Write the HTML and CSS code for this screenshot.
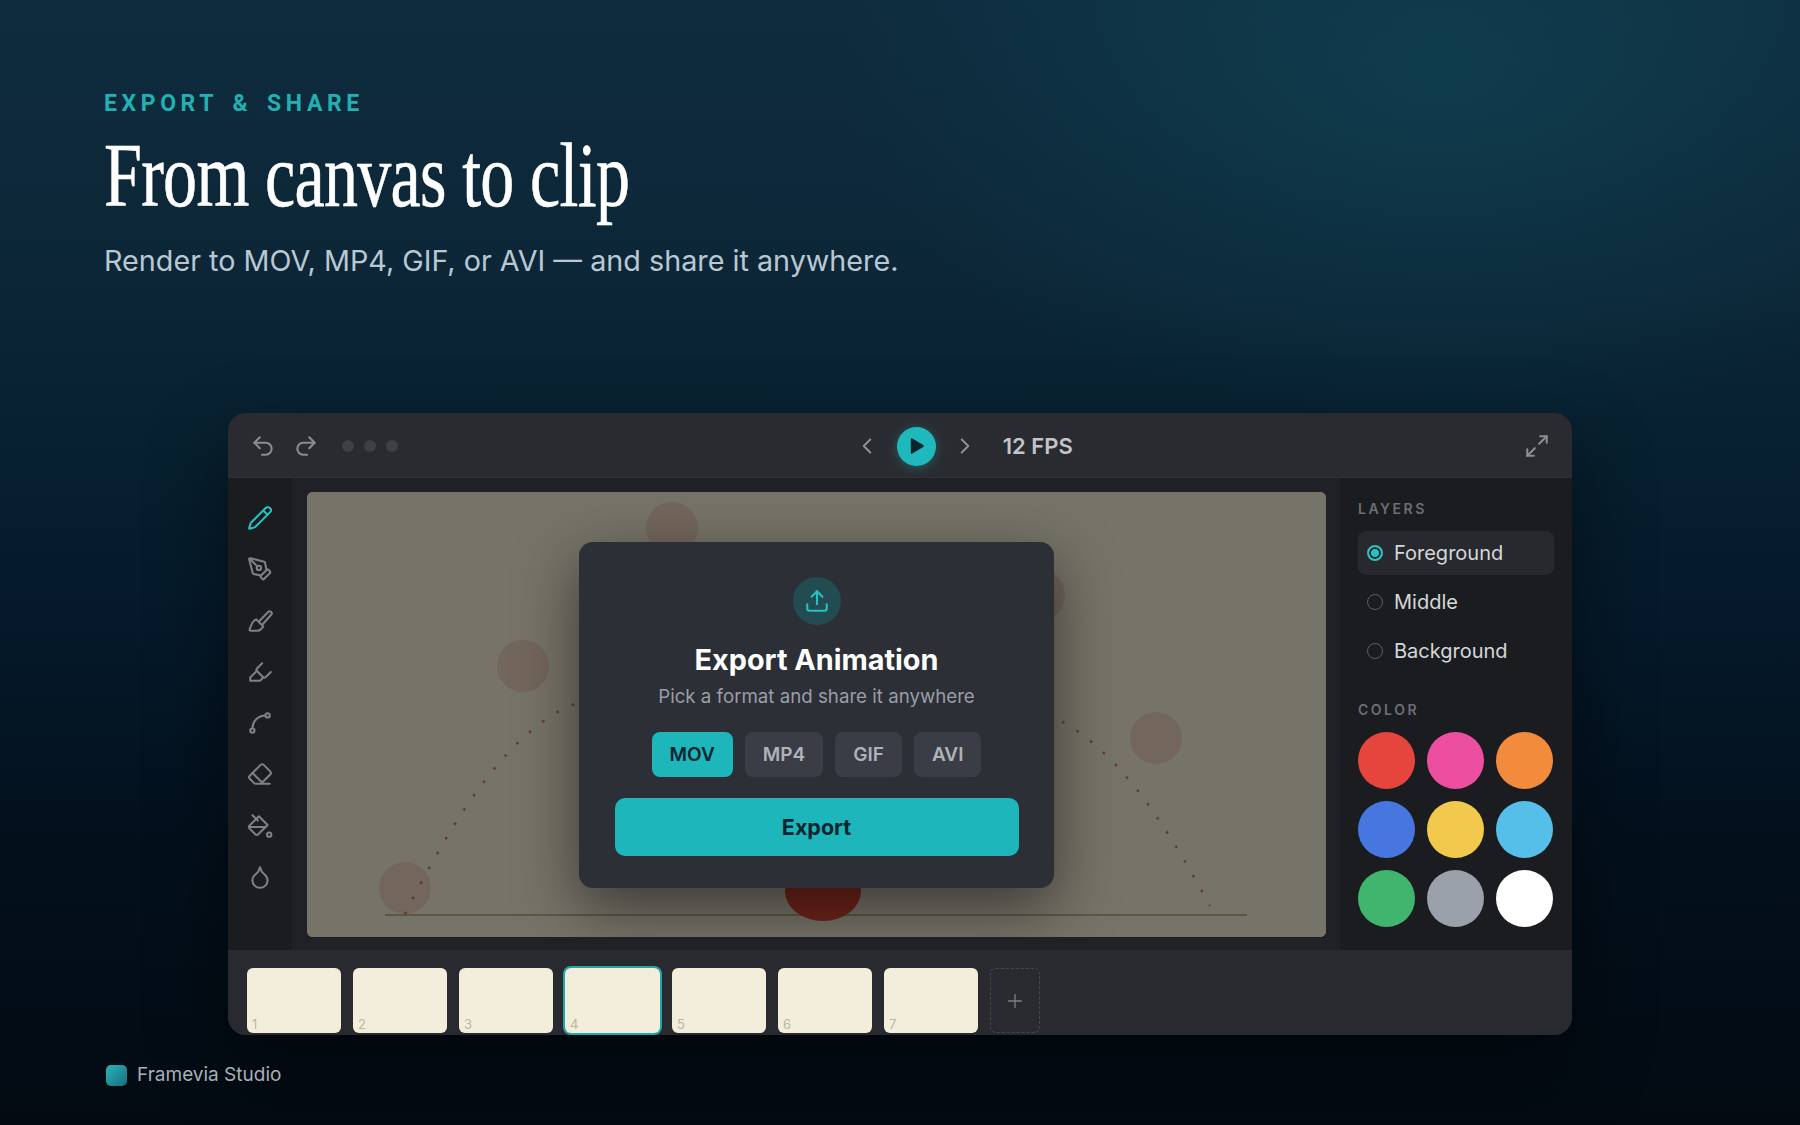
FILE: index.html
```html
<!DOCTYPE html>
<html lang="en">
<head>
  <meta charset="UTF-8">
  <title>Framevia Studio - Export &amp; Share</title>
  <link rel="stylesheet" href="styles.css">
</head>
<body>
  <header class="hero">
    <div class="eyebrow">EXPORT &amp; SHARE</div>
    <h1><span>From canvas to clip</span></h1>
    <p class="lede">Render to MOV, MP4, GIF, or AVI — and share it anywhere.</p>
  </header>

  <div class="window">
    <div class="toolbar">
      <div class="tb-group">
        <svg class="ico" viewBox="0 0 24 24"><path d="M9 14 4 9l5-5"/><path d="M4 9h10.5a5.5 5.5 0 0 1 5.5 5.5a5.5 5.5 0 0 1-5.5 5.5H11"/></svg>
        <svg class="ico" viewBox="0 0 24 24"><path d="m15 14 5-5-5-5"/><path d="M20 9H9.5A5.5 5.5 0 0 0 4 14.5A5.5 5.5 0 0 0 9.5 20H13"/></svg>
        <div class="dots"><i></i><i></i><i></i></div>
      </div>
      <div class="tb-group tb-center">
        <svg class="ico" viewBox="0 0 24 24"><path d="m15 18-6-6 6-6"/></svg>
        <div class="play"><svg viewBox="0 0 24 24"><polygon points="7 4 20 12 7 20"/></svg></div>
        <svg class="ico" viewBox="0 0 24 24"><path d="m9 18 6-6-6-6"/></svg>
        <div class="fps">12 FPS</div>
      </div>
      <svg class="ico" viewBox="0 0 24 24"><path d="M15 3h6v6"/><path d="m21 3-7 7"/><path d="m3 21 7-7"/><path d="M9 21H3v-6"/></svg>
    </div>

    <div class="main">
      <nav class="rail">
        <svg class="ico active" viewBox="0 0 24 24"><path d="M21.174 6.812a1 1 0 0 0-3.986-3.987L3.842 16.174a2 2 0 0 0-.5.83l-1.321 4.352a.5.5 0 0 0 .623.622l4.353-1.32a2 2 0 0 0 .83-.497z"/><path d="m15 5 4 4"/></svg>
        <svg class="ico" viewBox="0 0 24 24"><path d="M15.707 21.293a1 1 0 0 1-1.414 0l-1.586-1.586a1 1 0 0 1 0-1.414l5.586-5.586a1 1 0 0 1 1.414 0l1.586 1.586a1 1 0 0 1 0 1.414z"/><path d="m18 13-1.375-6.874a1 1 0 0 0-.746-.776L3.235 2.028a1 1 0 0 0-1.207 1.207L5.35 15.879a1 1 0 0 0 .776.746L13 18"/><path d="m2.3 2.3 7.286 7.286"/><circle cx="11" cy="11" r="2"/></svg>
        <svg class="ico" viewBox="0 0 24 24"><path d="m11.500 12 8-8.300a1.900 1.900 0 0 1 2.800 2.600L14.500 15"/><path d="M8.500 10.500 15 17c-.5 1-1 1.500-2 2.500-1 .8-2 1.500-3.500 1.500H3.500c-1 0-1.300-.8-1-1.500 1-2.500 2-7.500 6-9z"/></svg>
        <svg class="ico" viewBox="0 0 24 24"><path d="m9 11-6 6v3h9l3-3"/><path d="m22 12-4.600 4.600a2 2 0 0 1-2.800 0l-5.200-5.200a2 2 0 0 1 0-2.800L14 4"/></svg>
        <svg class="ico" viewBox="0 0 24 24"><circle cx="19" cy="5" r="2"/><circle cx="5" cy="19" r="2"/><path d="M5 17A12 12 0 0 1 17 5"/></svg>
        <svg class="ico" viewBox="0 0 24 24"><path d="M21 21H8a2 2 0 0 1-1.420-.587l-3.994-3.999a2 2 0 0 1 0-2.828l10-10a2 2 0 0 1 2.829 0l5.999 6a2 2 0 0 1 0 2.828L12.834 21"/><path d="m5.082 11.090 8.828 8.828"/></svg>
        <svg class="ico" viewBox="0 0 24 24"><path d="m19 11-8-8-8.600 8.600a2 2 0 0 0 0 2.800l5.200 5.200c.8.800 2 .800 2.800 0L19 11Z"/><path d="m5 2 5 5"/><path d="M2 13h15"/><circle cx="20.500" cy="20" r="2"/></svg>
        <svg class="ico" viewBox="0 0 24 24"><path d="M12 22a7 7 0 0 0 7-7c0-2-1-3.900-3-5.500s-3.500-4-4-6.500c-.5 2.500-2 4.900-4 6.500C6 11.100 5 13 5 15a7 7 0 0 0 7 7z"/></svg>
      </nav>

      <div class="stage">
        <div class="canvas">
          <svg class="art" viewBox="0 0 1019 445">
            <line class="ground" x1="78" y1="423" x2="940" y2="423"/>
            <circle class="ghost" cx="98" cy="396" r="26"/>
            <circle class="ghost" cx="216" cy="174" r="26"/>
            <circle class="ghost" cx="365" cy="36" r="26"/>
            <circle class="ghost" cx="732" cy="103" r="26"/>
            <circle class="ghost" cx="849" cy="246" r="26"/>
            <path class="arc" d="M98 422C140 338 200 236 270 211"/>
            <path class="arc" d="M740 222C805 250 855 325 903 414"/>
            <ellipse class="ball" cx="516" cy="399" rx="38" ry="30"/>
          </svg>
          <div class="overlay">
            <div class="modal">
              <div class="modal-icon">
                <svg class="ico" viewBox="0 0 24 24"><path d="M12 3v12"/><path d="m17 8-5-5-5 5"/><path d="M21 15v4a2 2 0 0 1-2 2H5a2 2 0 0 1-2-2v-4"/></svg>
              </div>
              <h2>Export Animation</h2>
              <p>Pick a format and share it anywhere</p>
              <div class="formats">
                <button class="fmt on">MOV</button>
                <button class="fmt">MP4</button>
                <button class="fmt">GIF</button>
                <button class="fmt">AVI</button>
              </div>
              <button class="export-btn">Export</button>
            </div>
          </div>
        </div>
      </div>

      <aside class="panel">
        <div class="panel-label">LAYERS</div>
        <div class="layers">
          <div class="layer on"><span class="radio"></span>Foreground</div>
          <div class="layer"><span class="radio"></span>Middle</div>
          <div class="layer"><span class="radio"></span>Background</div>
        </div>
        <div class="panel-label color-label">COLOR</div>
        <div class="swatches">
          <i class="red"></i><i class="pink"></i><i class="orange"></i>
          <i class="blue"></i><i class="yellow"></i><i class="sky"></i>
          <i class="green"></i><i class="gray"></i><i class="white"></i>
        </div>
      </aside>
    </div>

    <div class="film">
      <div class="thumb">1</div>
      <div class="thumb">2</div>
      <div class="thumb">3</div>
      <div class="thumb current">4</div>
      <div class="thumb">5</div>
      <div class="thumb">6</div>
      <div class="thumb">7</div>
      <div class="add">
        <svg class="ico" viewBox="0 0 24 24"><path d="M5 12h14"/><path d="M12 5v14"/></svg>
      </div>
    </div>
  </div>

  <footer class="brand"><i></i>Framevia Studio</footer>
</body>
</html>
```

FILE: styles.css
```css
* {
  box-sizing: border-box;
}
body {
  margin: 0;
  width: 1800px;
  height: 1125px;
  overflow: hidden;
  font-family: Inter, "Liberation Sans", sans-serif;
  color: #fff;
  background:
    radial-gradient(ellipse 600px 360px at 1440px 70px, rgba(18, 88, 104, 0.4), rgba(18, 88, 104, 0) 100%),
    linear-gradient(180deg, #0e2c3e 0%, #0c2637 25%, #07202f 40%, #05192a 55%, #03101c 75%, #030a12 100%);
}

.hero {
  height: 413px;
  padding: 91px 104px 0;
}
.eyebrow {
  font-family: Roboto, sans-serif;
  font-size: 23px;
  line-height: 26px;
  font-weight: 700;
  letter-spacing: 0.2em;
  word-spacing: 0.2em;
  color: #22b0b2;
}
h1 {
  margin: 13px 0 0;
  font-family: "Liberation Serif", serif;
  font-size: 92px;
  line-height: 90px;
  font-weight: 400;
  letter-spacing: -0.01em;
  white-space: nowrap;
  -webkit-text-stroke: 0.6px #fff;
}
h1 span {
  display: inline-block;
  transform: scaleX(0.739);
  transform-origin: left center;
}
.lede {
  margin: 23px 0 0;
  font-size: 28.75px;
  line-height: 36px;
  color: #b9c8d3;
}

.ico {
  display: block;
  width: 26px;
  height: 26px;
  fill: none;
  stroke: currentColor;
  stroke-width: 1.9;
  stroke-linecap: round;
  stroke-linejoin: round;
  flex: none;
}

.window {
  width: 1344px;
  height: 622px;
  margin: 0 auto;
  border-radius: 18px;
  overflow: hidden;
  background: #202126;
  box-shadow: 0 30px 80px rgba(0, 0, 0, 0.45);
}
.toolbar {
  height: 65px;
  padding: 2px 22px 0;
  display: flex;
  align-items: center;
  justify-content: space-between;
  background: #2a2b30;
  border-bottom: 1px solid #303137;
  color: #8b8d92;
}
.tb-group {
  display: flex;
  align-items: center;
  gap: 17px;
}
.tb-center {
  gap: 16.5px;
  margin-left: 5px;
}
.dots {
  display: flex;
  gap: 10px;
  margin-left: 6px;
}
.dots i {
  width: 12px;
  height: 12px;
  border-radius: 50%;
  background: #3e4046;
}
.play {
  width: 39px;
  height: 39px;
  border-radius: 50%;
  background: #1fb8bc;
  box-shadow: 0 2px 12px rgba(31, 184, 188, 0.35);
  display: flex;
  align-items: center;
  justify-content: center;
}
.play svg {
  width: 20px;
  height: 20px;
  fill: #07242f;
  stroke: #07242f;
  stroke-width: 2.5;
  stroke-linejoin: round;
}
.fps {
  margin-left: 8px;
  font-size: 22px;
  font-weight: 600;
  color: #c2c5ca;
}

.main {
  height: 472px;
  display: flex;
}
.rail {
  width: 64px;
  padding-top: 27px;
  display: flex;
  flex-direction: column;
  align-items: center;
  gap: 25.3px;
  background: #1b1c20;
  color: #7e8085;
}
.rail .active {
  color: #27c1c1;
}
.stage {
  flex: 1;
  padding: 14px 14px 13px 15px;
}
.canvas {
  position: relative;
  height: 100%;
  border-radius: 6px;
  overflow: hidden;
  background: #f5efdc;
}
.art {
  position: absolute;
  inset: 0;
  width: 100%;
  height: 100%;
}
.ghost {
  fill: #d8453a;
  opacity: 0.17;
}
.ball {
  fill: #e8402f;
}
.ground {
  stroke: #bab68c;
  stroke-width: 2;
}
.arc {
  fill: none;
  stroke: #c0484a;
  stroke-width: 2.5;
  stroke-dasharray: 2.5 14.5;
  opacity: 0.75;
}
.overlay {
  position: absolute;
  inset: 0;
  display: flex;
  align-items: center;
  justify-content: center;
  background: rgba(12, 13, 10, 0.55);
}
.modal {
  width: 475px;
  height: 346px;
  padding: 35px 35px 0;
  display: flex;
  flex-direction: column;
  align-items: center;
  border-radius: 14px;
  background: #2c2f36;
  box-shadow: 0 20px 60px rgba(0, 0, 0, 0.5);
}
.modal-icon {
  width: 48px;
  height: 48px;
  border-radius: 50%;
  display: flex;
  align-items: center;
  justify-content: center;
  background: #234b52;
  color: #27c1c1;
}
.modal h2 {
  margin: 17px 0 0;
  font-size: 28.8px;
  line-height: 36px;
  font-weight: 700;
}
.modal p {
  margin: 7px 0 0;
  font-size: 18.7px;
  line-height: 24px;
  color: #999ea8;
}
.formats {
  display: flex;
  gap: 12px;
  margin-top: 23px;
}
.fmt {
  height: 45px;
  padding: 0 18px;
  border: 0;
  border-radius: 8px;
  font: 600 19px Inter, sans-serif;
  background: #3a3d46;
  color: #aeb2b9;
}
.fmt.on {
  background: #1db6ba;
  color: #07242f;
}
.export-btn {
  width: 404px;
  height: 58px;
  margin-top: 21px;
  border: 0;
  border-radius: 10px;
  font: 700 21.5px Inter, sans-serif;
  background: #1db6ba;
  color: #07242f;
}

.panel {
  width: 232px;
  padding: 22px 18px 0;
  background: #1b1c20;
}
.panel-label {
  font-size: 14px;
  line-height: 18px;
  font-weight: 600;
  letter-spacing: 0.18em;
  color: #6c6e74;
}
.layers {
  margin-top: 13px;
  display: flex;
  flex-direction: column;
  gap: 5px;
}
.layer {
  height: 44px;
  padding-left: 9px;
  display: flex;
  align-items: center;
  gap: 11px;
  border-radius: 8px;
  font-size: 20px;
  color: #d5d7da;
}
.layer.on {
  background: #28292e;
}
.radio {
  width: 16px;
  height: 16px;
  border-radius: 50%;
  border: 1.5px solid #5a5c62;
}
.layer.on .radio {
  border: 2px solid #27c1c1;
  background: #27c1c1;
  box-shadow: inset 0 0 0 2px #1b1c20;
}
.color-label {
  margin-top: 28px;
}
.swatches {
  margin-top: 13px;
  display: grid;
  grid-template-columns: repeat(3, 57px);
  gap: 12.2px 12px;
}
.swatches i {
  height: 57px;
  border-radius: 50%;
}
.red { background: #e5453c; }
.pink { background: #ec4f9f; }
.orange { background: #f28b3c; }
.blue { background: #4676e0; }
.yellow { background: #f2c94c; }
.sky { background: #56bfe9; }
.green { background: #3fb56d; }
.gray { background: #9aa1ab; }
.white { background: #fff; }

.film {
  height: 85px;
  padding: 18px 0 0 19px;
  display: flex;
  gap: 12px;
  background: #292a2f;
}
.thumb {
  width: 94px;
  height: 65px;
  padding: 0 0 1px 5px;
  display: flex;
  align-items: flex-end;
  border-radius: 6px;
  font-size: 13px;
  line-height: 16px;
  background: #f3eedb;
  color: #bcb6a4;
}
.thumb.current {
  width: 95px;
  box-shadow: 0 0 0 2px #1fa8aa;
}
.add {
  width: 50px;
  height: 65px;
  display: flex;
  align-items: center;
  justify-content: center;
  border: 1px dashed #46484e;
  border-radius: 6px;
  color: #7e8085;
}
.add .ico {
  width: 22px;
  height: 22px;
  stroke-width: 1.4;
}

.brand {
  margin: 29px 0 0 106px;
  display: flex;
  align-items: center;
  gap: 10px;
  font-size: 19px;
  line-height: 22px;
  color: #a6b0b8;
}
.brand i {
  width: 21px;
  height: 21px;
  border-radius: 5px;
  background: linear-gradient(135deg, #2bb5b8, #176d80);
}
```
